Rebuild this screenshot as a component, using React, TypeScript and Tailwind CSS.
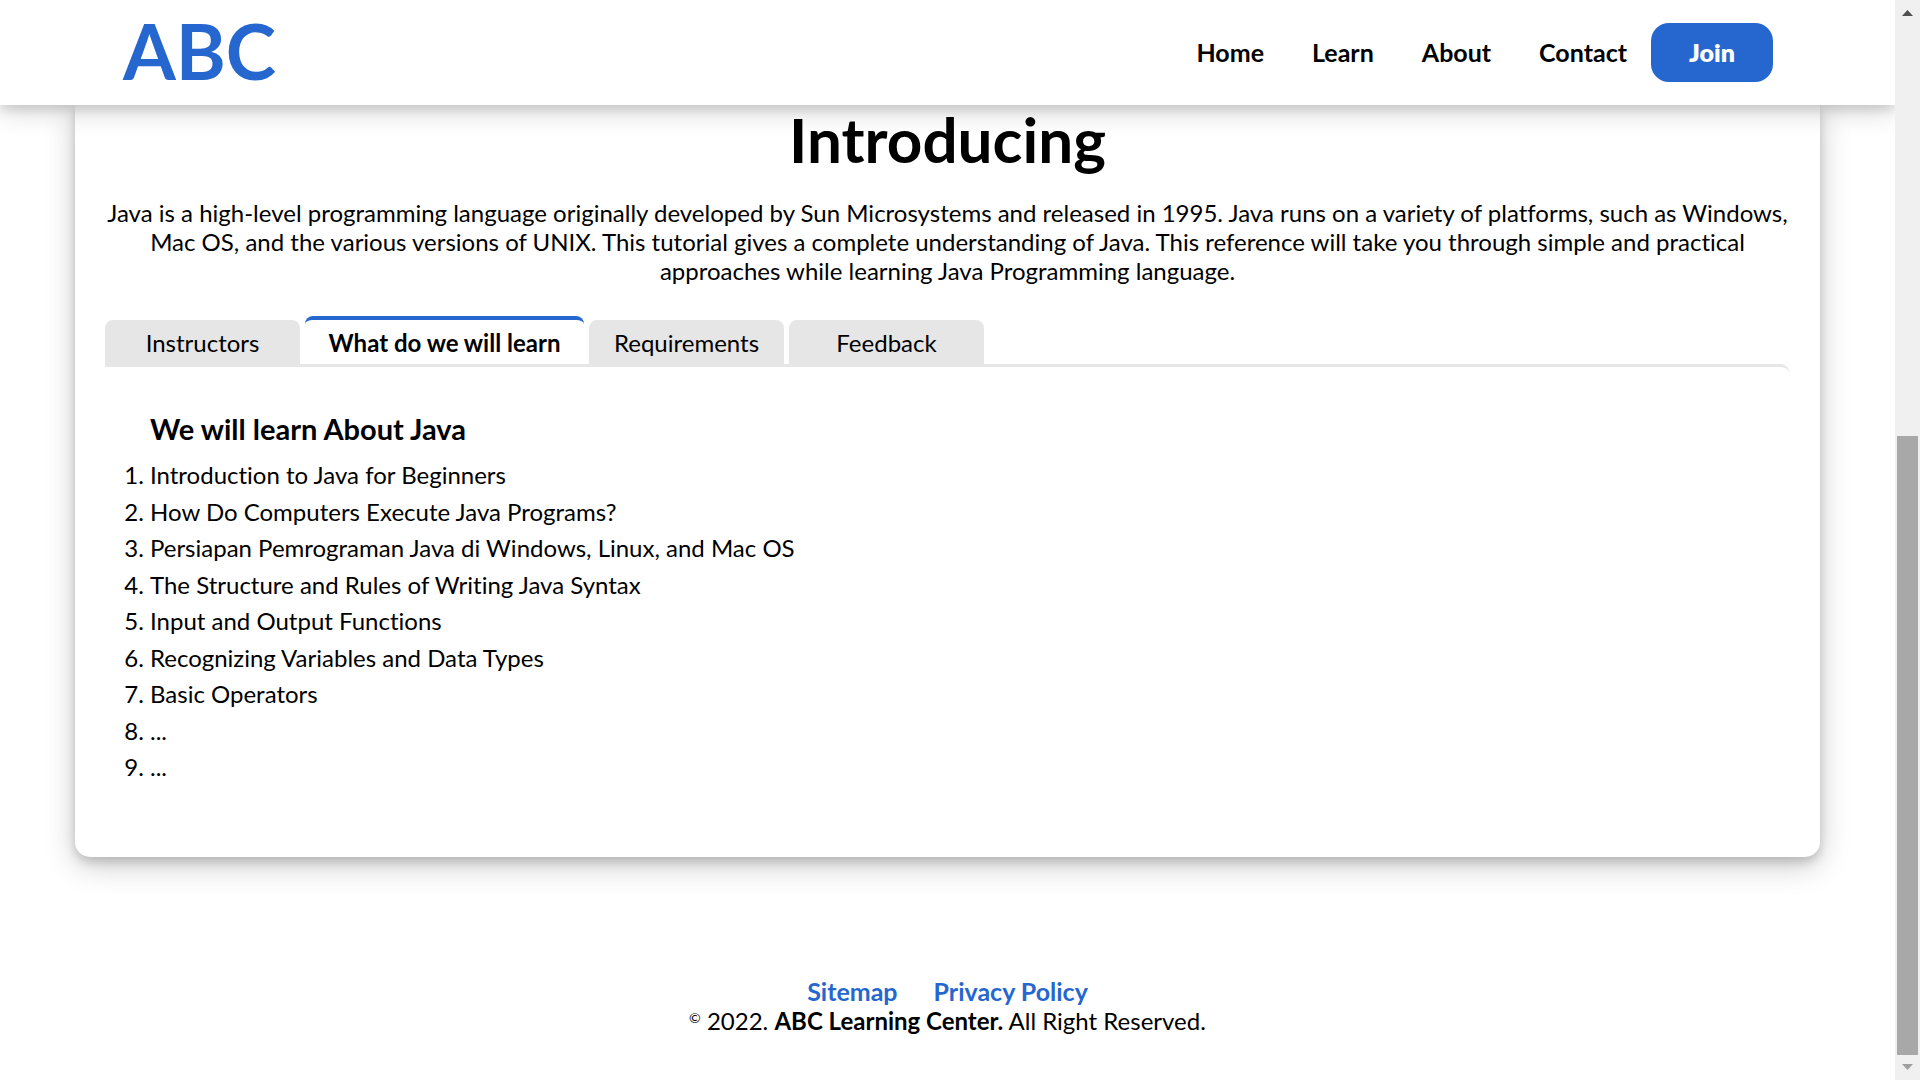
const navLinks = ["Home", "Learn", "About", "Contact"];

const tabs = ["Instructors", "What do we will learn", "Requirements", "Feedback"];
const activeTab = "What do we will learn";

const lessons = [
  "Introduction to Java for Beginners",
  "How Do Computers Execute Java Programs?",
  "Persiapan Pemrograman Java di Windows, Linux, and Mac OS",
  "The Structure and Rules of Writing Java Syntax",
  "Input and Output Functions",
  "Recognizing Variables and Data Types",
  "Basic Operators",
  "...",
  "...",
];

function Header() {
  return (
    <header className="relative z-10 flex h-[105px] items-center justify-between bg-white pr-[122px] pl-[123px] shadow-[0_5px_10px_rgba(0,0,0,0.1),0_5px_25px_rgba(0,0,0,0.19)]">
      <a href="#top" className="pb-1 text-[76px] leading-none font-bold text-[#2667cf]">
        ABC
      </a>
      <nav className="flex items-center gap-6 text-[25px]">
        <div className="flex items-center gap-12 font-bold">
          {navLinks.map((label) => (
            <a key={label} href={`#${label.toLowerCase()}`}>
              {label}
            </a>
          ))}
        </div>
        <button type="button" className="h-[59px] w-[122px] rounded-[18px] bg-[#2667cf] font-extrabold text-white">
          Join
        </button>
      </nav>
    </header>
  );
}

function Tabs() {
  return (
    <div role="tablist" className="flex h-12 items-end gap-[5px]">
      {tabs.map((label) =>
        label === activeTab ? (
          <button
            key={label}
            type="button"
            role="tab"
            aria-selected
            className="h-12 w-[279px] rounded-t-lg border-t-4 border-[#2667cf] font-bold"
          >
            {label}
          </button>
        ) : (
          <button key={label} type="button" role="tab" aria-selected={false} className="h-11 w-[195px] rounded-t-lg bg-[#e6e6e6]">
            {label}
          </button>
        ),
      )}
    </div>
  );
}

function CourseCard() {
  return (
    <main className="mx-[75px] rounded-b-[15px] bg-white px-[30px] pb-[76px] shadow-[0_5px_10px_rgba(0,0,0,0.15),0_8px_30px_rgba(0,0,0,0.22)]">
      <h1 className="text-center text-[62px] leading-[68px] font-bold">Introducing</h1>
      <p className="mt-[25px] text-center">
        Java is a high-level programming language originally developed by Sun Microsystems and released in 1995. Java runs on a
        variety of platforms, such as Windows, Mac OS, and the various versions of UNIX. This tutorial gives a complete
        understanding of Java. This reference will take you through simple and practical approaches while learning Java
        Programming language.
      </p>
      <div className="mt-[31px]">
        <Tabs />
      </div>
      <section role="tabpanel" aria-label={activeTab} className="rounded-tr-[10px] border-t-[3px] border-[#e6e6e6] pt-[45px] pl-[45px]">
        <h2 className="text-[29px] leading-[34px] font-bold">We will learn About Java</h2>
        <ol className="mt-[7px] list-decimal">
          {lessons.map((lesson, index) => (
            <li key={index} className="odd:pt-[7px] even:pt-2">
              {lesson}
            </li>
          ))}
        </ol>
      </section>
    </main>
  );
}

function Footer() {
  return (
    <footer className="mt-[120px] pb-[44px] text-center">
      <div className="flex justify-center gap-9 text-[25px] font-bold text-[#2667cf]">
        <a href="#sitemap">Sitemap</a>
        <a href="#privacy">Privacy Policy</a>
      </div>
      <p>
        <sup className="text-sm leading-none">©</sup> 2022. <b>ABC Learning Center.</b> All Right Reserved.
      </p>
    </footer>
  );
}

function ScrollRail() {
  return (
    <div aria-hidden="true" className="relative z-20 flex w-[25px] shrink-0 flex-col items-center bg-[#f0f0f0]">
      <svg width="11" height="6" viewBox="0 0 11 6" className="mt-[10px] fill-[#505050]">
        <path d="M0 6 L5.5 0 L11 6 Z" />
      </svg>
      <div className="grow-[420]" />
      <div className="w-[21px] grow-[619] bg-[#a8a8a8]" />
      <svg width="11" height="6" viewBox="0 0 11 6" className="mt-[9px] mb-[10px] fill-[#a0a0a0]">
        <path d="M0 0 L11 0 L5.5 6 Z" />
      </svg>
    </div>
  );
}

export default function App() {
  return (
    <div className="flex min-h-screen bg-white font-['Lato',sans-serif] text-[24px] leading-[29px] text-black [font-variant-ligatures:none]">
      <div className="min-w-0 flex-1">
        <Header />
        <CourseCard />
        <Footer />
      </div>
      <ScrollRail />
    </div>
  );
}
